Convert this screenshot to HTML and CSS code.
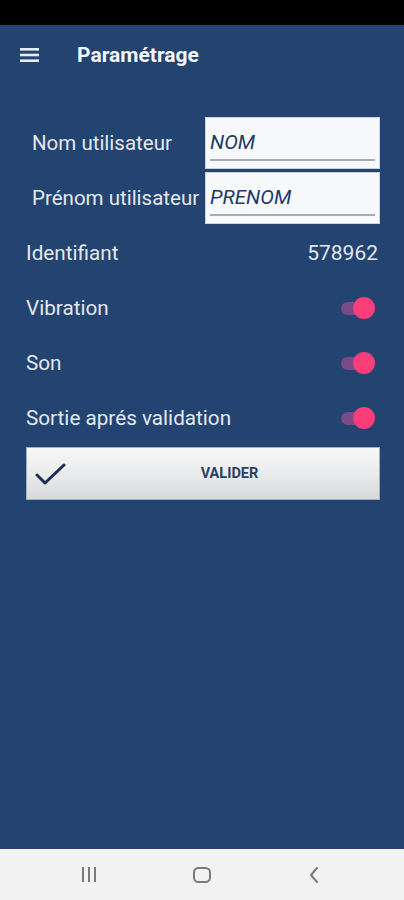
FILE: index.html
```html
<!DOCTYPE html>
<html lang="fr">
  <head>
    <meta charset="UTF-8" />
    <meta name="viewport" content="width=device-width, initial-scale=1.0" />
    <link rel="stylesheet" href="styles.css">
  </head>
  <body>
    <div class="status-bar"></div>

    <div class="app-bar">
      <svg class="menu-icon" width="20" height="16" viewBox="0 0 20 16">
        <rect x="0" y="1" width="19" height="2.6" fill="#e8edf4" />
        <rect x="0" y="6.7" width="19" height="2.6" fill="#e8edf4" />
        <rect x="0" y="12.4" width="19" height="2.6" fill="#e8edf4" />
      </svg>
      <div class="app-title">Paramétrage</div>
    </div>

    <div class="content">
      <div class="field-row">
        <div class="field-label">Nom utilisateur</div>
        <div class="field-box"><span class="field-text">NOM</span></div>
      </div>
      <div class="field-row">
        <div class="field-label">Prénom utilisateur</div>
        <div class="field-box"><span class="field-text">PRENOM</span></div>
      </div>

      <div class="row">
        <span>Identifiant</span>
        <span class="value">578962</span>
      </div>
      <div class="row">
        <span>Vibration</span>
        <div class="switch"><div class="track"></div><div class="thumb"></div></div>
      </div>
      <div class="row">
        <span>Son</span>
        <div class="switch"><div class="track"></div><div class="thumb"></div></div>
      </div>
      <div class="row">
        <span>Sortie aprés validation</span>
        <div class="switch"><div class="track"></div><div class="thumb"></div></div>
      </div>

      <div class="button">
        <div class="button-icon">
          <svg width="32" height="24" viewBox="0 0 32 24">
            <path d="M2 13 L10 21 L29 3" fill="none" stroke="#1f2f52" stroke-width="3" stroke-linecap="round" stroke-linejoin="round" />
          </svg>
        </div>
        <div class="button-text">VALIDER</div>
      </div>
    </div>

    <div class="nav-bar">
      <svg width="16" height="15" viewBox="0 0 16 15">
        <rect x="1" y="0" width="2" height="15" fill="#7a7a7a" />
        <rect x="7" y="0" width="2" height="15" fill="#7a7a7a" />
        <rect x="13" y="0" width="2" height="15" fill="#7a7a7a" />
      </svg>
      <svg class="nav-home" width="18" height="16" viewBox="0 0 18 16">
        <rect x="1" y="1" width="16" height="14" rx="4.5" fill="none" stroke="#7a7a7a" stroke-width="2" />
      </svg>
      <svg class="nav-back" width="10" height="16" viewBox="0 0 10 16">
        <path d="M8 1 L2 8 L8 15" fill="none" stroke="#7a7a7a" stroke-width="2" stroke-linecap="round" stroke-linejoin="round" />
      </svg>
    </div>
  </body>
</html>
```

FILE: styles.css
```css
* {
  box-sizing: border-box;
}

body {
  margin: 0;
  width: 404px;
  height: 900px;
  display: flex;
  flex-direction: column;
  background-color: #234371;
  font-family: Roboto, "Noto Sans", sans-serif;
  color: #e4e8ee;
}

.status-bar {
  height: 25px;
  background-color: #000;
}

.app-bar {
  height: 60px;
  display: flex;
  align-items: center;
  padding-left: 20px;
}

.menu-icon {
  margin-right: 37px;
}

.app-title {
  font-size: 21px;
  font-weight: bold;
  color: #f2f5f9;
}

.content {
  flex: 1;
  padding: 32px 24px 0 26px;
}

.field-row {
  display: flex;
  align-items: center;
  height: 52px;
  margin-bottom: 3px;
}

.field-label {
  width: 179px;
  padding-left: 6px;
  font-size: 20.5px;
  white-space: nowrap;
}

.field-box {
  width: 175px;
  height: 52px;
  background-color: #f7f9fc;
  border: 1px solid #c9d2de;
  padding: 13px 4px 0 4px;
}

.field-text {
  display: block;
  font-size: 20.5px;
  font-style: italic;
  color: #1e3b68;
  padding: 0 0 5px 0;
  border-bottom: 2px solid #a9acb0;
  line-height: 23px;
}

.row {
  height: 55px;
  padding-bottom: 4px;
  display: flex;
  align-items: center;
  justify-content: space-between;
  font-size: 20.7px;
}

.value {
  padding-right: 2px;
  font-size: 21px;
}

.switch {
  position: relative;
  width: 34px;
  height: 22px;
  margin-right: 5px;
}

.switch .track {
  position: absolute;
  left: 0;
  top: 5px;
  width: 30px;
  height: 13px;
  border-radius: 7px;
  background-color: #7a4a86;
}

.switch .thumb {
  position: absolute;
  right: 0;
  top: 0;
  width: 22px;
  height: 22px;
  border-radius: 50%;
  background-color: #fb3e7a;
}

.button {
  height: 53px;
  display: flex;
  align-items: center;
  background: linear-gradient(#f7f7f7, #e9eaeb 55%, #d6d8da);
  border: 1px solid #a7b1bd;
}

.button-icon {
  width: 53px;
  padding-left: 8px;
  padding-top: 4px;
}

.button-text {
  flex: 1;
  text-align: center;
  font-size: 14.5px;
  font-weight: bold;
  color: #2b3f66;
}

.nav-bar {
  height: 51px;
  background-color: #f2f2f2;
  display: flex;
  align-items: center;
  padding-left: 81px;
}

.nav-home {
  margin-left: 96px;
}

.nav-back {
  margin-left: 98px;
}
```
